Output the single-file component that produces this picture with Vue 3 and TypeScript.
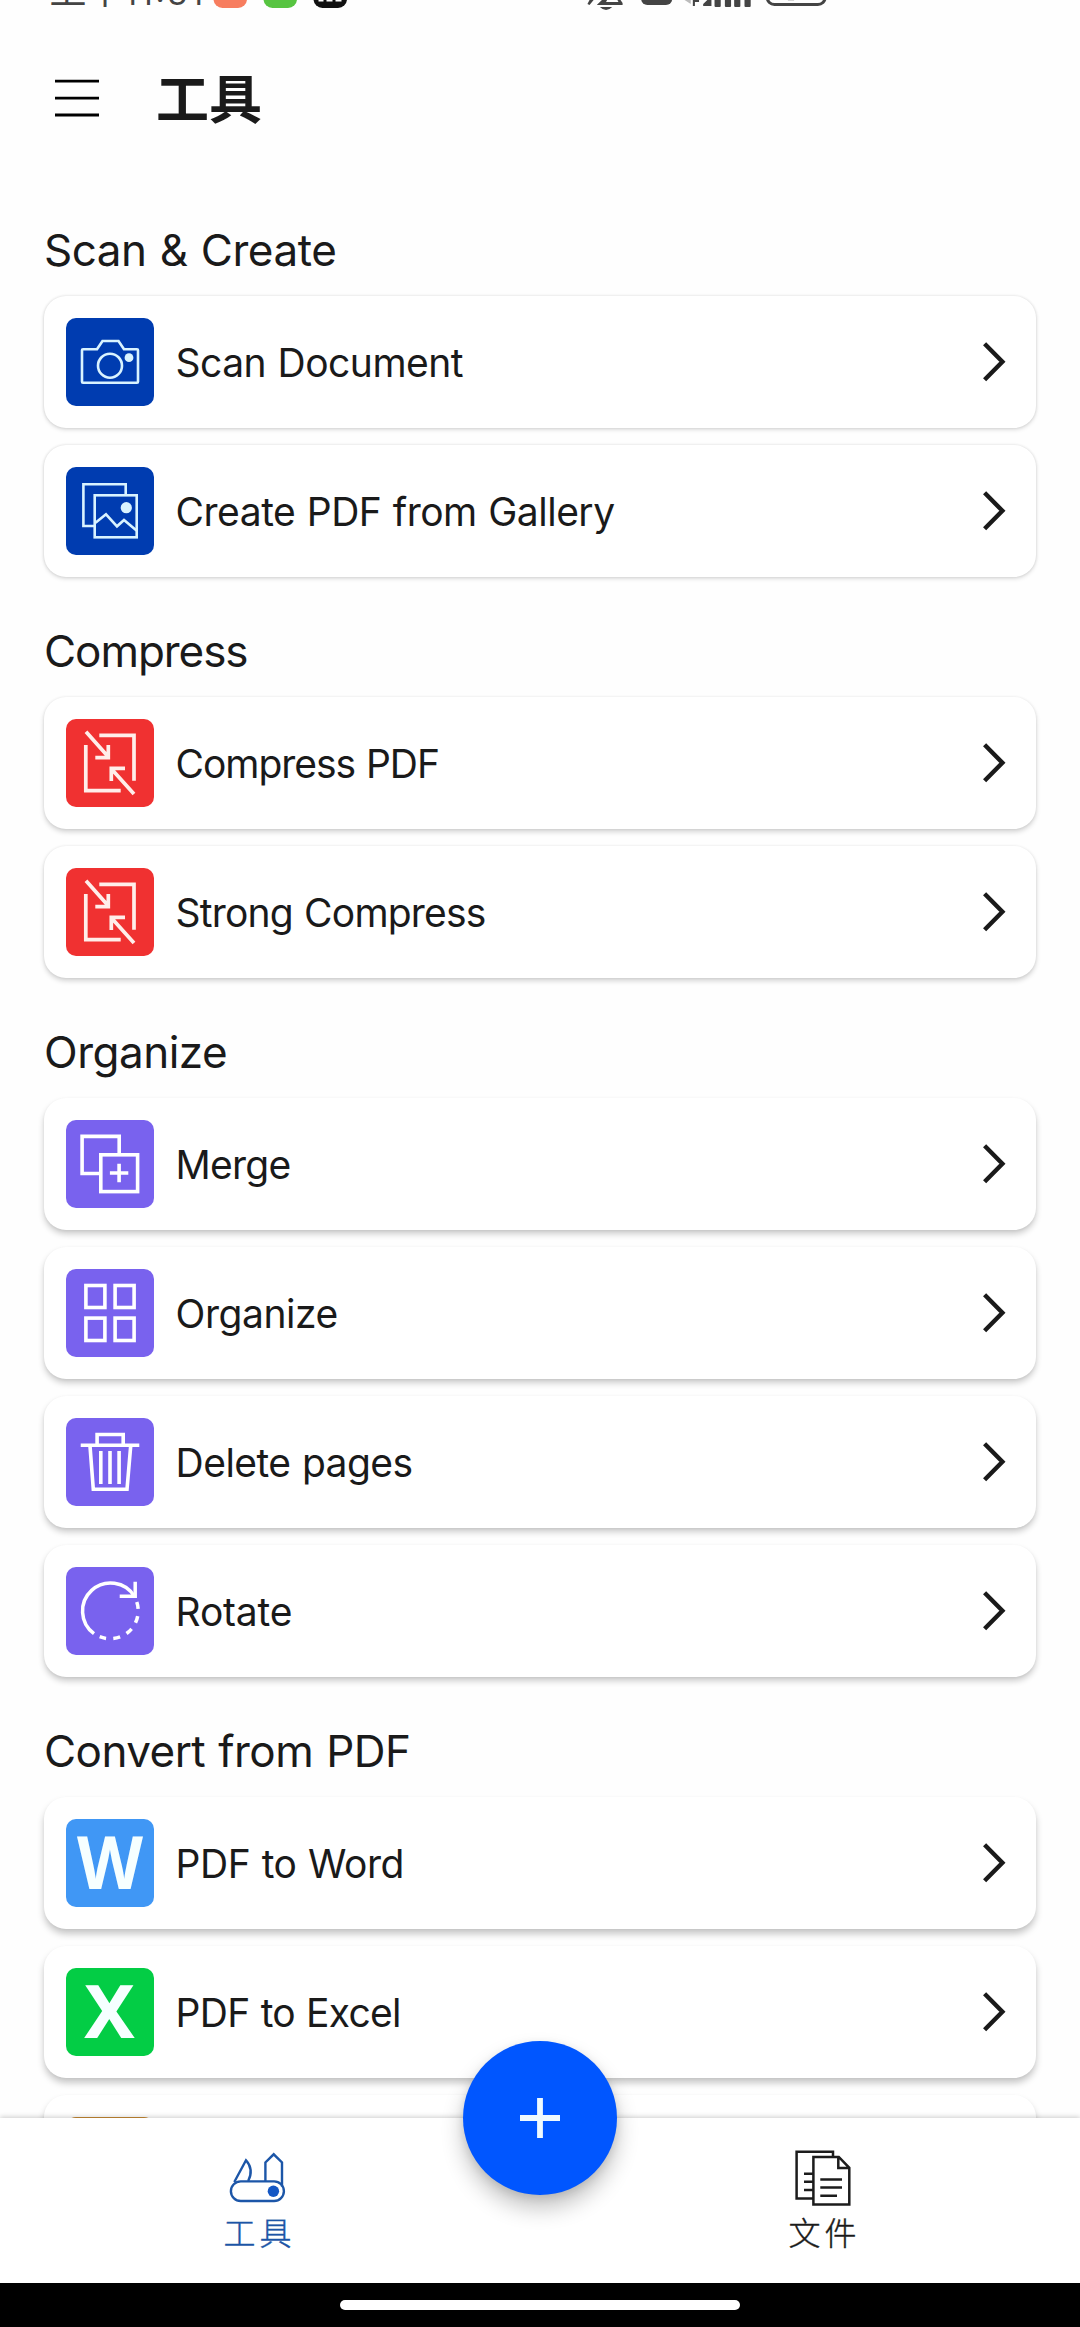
<script setup lang="ts">
interface Tool {
  label: string
  icon: string
  color: string
  tracking: number
}
interface Section {
  title: string
  tracking: number
  tools: Tool[]
}

const BLUE = '#003cb0'
const RED = '#f03131'
const VIOLET = '#7962ee'

const sections: Section[] = [
  {
    title: 'Scan & Create',
    tracking: -0.48,
    tools: [
      { label: 'Scan Document', icon: 'camera', color: BLUE, tracking: -0.52 },
      { label: 'Create PDF from Gallery', icon: 'gallery', color: BLUE, tracking: -0.5 },
    ],
  },
  {
    title: 'Compress',
    tracking: -1.06,
    tools: [
      { label: 'Compress PDF', icon: 'compress', color: RED, tracking: -1.05 },
      { label: 'Strong Compress', icon: 'compress', color: RED, tracking: -0.8 },
    ],
  },
  {
    title: 'Organize',
    tracking: -0.5,
    tools: [
      { label: 'Merge', icon: 'merge', color: VIOLET, tracking: -0.75 },
      { label: 'Organize', icon: 'grid', color: VIOLET, tracking: -0.45 },
      { label: 'Delete pages', icon: 'trash', color: VIOLET, tracking: -0.55 },
      { label: 'Rotate', icon: 'rotate', color: VIOLET, tracking: -0.2 },
    ],
  },
  {
    title: 'Convert from PDF',
    tracking: -0.55,
    tools: [
      { label: 'PDF to Word', icon: 'word', color: '#4097f5', tracking: -0.48 },
      { label: 'PDF to Excel', icon: 'excel', color: '#03cd45', tracking: -0.75 },
      { label: '', icon: '', color: '#c78a35', tracking: 0 },
    ],
  },
]
</script>

<template>
  <div class="screen">
    <svg class="status" viewBox="0 0 1080 24" width="1080" height="24">
      <g class="status-text">
        <text x="49.5" y="4" font-size="37">上午</text>
        <text x="124" y="5" font-size="32" textLength="79" class="clock">11:31</text>
      </g>
      <rect x="213.5" y="-25" width="33.5" height="33" rx="9" fill="#f77d5f" />
      <rect x="263.5" y="-25" width="33.5" height="33" rx="9" fill="#57c441" />
      <rect x="313.5" y="-25" width="33.5" height="33" rx="9" fill="#111" />
      <path d="M318.500 0.500h5M326.500 0.500h6M335.500 0.500h6" stroke="#fff" stroke-width="2" />
      <g transform="translate(-18 0) scale(1.0332 1)">
        <g fill="#444">
          <path d="M588 0l-2 4 2 1 4-5zM600 0l-5 5h25v-2l-2-3h-3l1 2h-12l1-2zM598 7h12q-6 6-12 0z" />
          <rect x="638" y="-20" width="30" height="25" rx="6" />
          <path d="M680 0l6 4v-4z" fill="#bbb" />
          <path d="M688 0h6v2h-4v4h-2zM698 6v-2l4-4h4v6z" />
          <rect x="709" y="-8" width="6" height="15" rx="1" />
          <rect x="719" y="-8" width="6" height="15" rx="1" />
          <rect x="728" y="-8" width="6" height="15" rx="1" />
          <rect x="738" y="-8" width="6" height="15" rx="1" />
        </g>
        <rect x="760" y="-22" width="56" height="26.5" rx="7" fill="none" stroke="#444" stroke-width="3" />
        <path d="M780 0h6" stroke="#aaa" stroke-width="1" />
      </g>
    </svg>

    <header class="header">
      <svg class="menu" width="44" height="38" viewBox="0 0 44 38">
        <path d="M0 2.2h44M0 19.2h44M0 36h44" stroke="#000" stroke-width="2.8" />
      </svg>
      <h1 class="title">工具</h1>
    </header>

    <main class="content">
      <section v-for="section in sections" :key="section.title" class="section">
        <h2 class="heading" :style="{ letterSpacing: section.tracking + 'px' }">{{ section.title }}</h2>
        <div class="cards">
          <div v-for="(tool, i) in section.tools" :key="i" class="card">
            <div class="tile" :style="{ background: tool.color }">
              <svg viewBox="0 0 88 88" width="88" height="88" class="glyph">
                <g v-if="tool.icon === 'camera'" stroke="#d9f3ff" stroke-width="2.6">
                  <path d="M17 31.3H31L36.5 23H52.5L58 31.3H71Q72 31.3 72 32.3V63.7Q72 64.7 71 64.7H17Q16 64.7 16 63.7V32.3Q16 31.3 17 31.3Z" />
                  <circle cx="44" cy="47.7" r="12" />
                  <circle cx="63" cy="39.7" r="4.4" fill="#d9f3ff" stroke="none" />
                </g>
                <g v-else-if="tool.icon === 'gallery'" stroke="#d9f3ff" stroke-width="2.6">
                  <path d="M28 59H17.4V17.3H59.7V28" />
                  <rect x="28.7" y="28.3" width="42" height="42" />
                  <path d="M29.5 55.8L40 47.3L51 59.3L58 53L70.5 63.5" />
                  <circle cx="60.3" cy="40.7" r="5.6" fill="#d9f3ff" stroke="none" />
                </g>
                <g v-else-if="tool.icon === 'compress'" stroke="#ffeeea" stroke-width="3.7">
                  <path d="M33.3 16.3H68V61.7M19.8 26V71.7H54.7" />
                  <path d="M20 12.7L42 37.5M29.3 38.7H42.3V26" />
                  <path d="M68 75L45.5 50M59 49.3H45.3V62" />
                </g>
                <g v-else-if="tool.icon === 'merge'" stroke="#fff" stroke-width="3.6">
                  <path d="M34 53.5H16.1V16.4H53.2V34" />
                  <rect x="34.8" y="34.8" width="36.8" height="36.8" />
                  <path d="M53.1 43.8V62.2M43.9 53H62.3" />
                </g>
                <g v-else-if="tool.icon === 'grid'" stroke="#fff" stroke-width="3.6">
                  <rect x="19.9" y="16.5" width="19" height="22" />
                  <rect x="49.1" y="16.5" width="19" height="22" />
                  <rect x="19.9" y="49.1" width="19" height="22.4" />
                  <rect x="49.1" y="49.1" width="19" height="22.4" />
                </g>
                <g v-else-if="tool.icon === 'trash'" stroke="#fff" stroke-width="3.6">
                  <path d="M14.7 27.2H73.3M31.1 27V16.5H57.2V27" />
                  <path d="M24 28L27.3 71.3H61L64.7 28" />
                  <path d="M34.8 33V66M44 33V66M53.1 33V66" />
                </g>
                <g v-else-if="tool.icon === 'rotate'" stroke="#fff" stroke-width="3.5">
                  <path d="M28 66.6A28 28 0 1 1 68.500 29.500" />
                  <path d="M53.7 29.3H69.2V14.7" />
                  <path d="M70.8 35A28 28 0 0 1 33.7 69.7" stroke-dasharray="7 7.2" />
                </g>
                <text v-else-if="tool.icon === 'word'" x="11" y="70" textLength="66" lengthAdjust="spacingAndGlyphs" class="letter">W</text>
                <text v-else-if="tool.icon === 'excel'" x="18" y="70" textLength="51" lengthAdjust="spacingAndGlyphs" class="letter">X</text>
              </svg>
            </div>
            <span class="label" :style="{ letterSpacing: tool.tracking + 'px' }">{{ tool.label }}</span>
            <svg class="chevron" width="24" height="42" viewBox="0 0 24 42">
              <path d="M2.6 2.8L20.4 20.8L2.6 38.8" fill="none" stroke="#1a1a1a" stroke-width="4.4" />
            </svg>
          </div>
        </div>
      </section>
    </main>

    <nav class="nav">
      <div class="tab active">
        <svg width="60" height="58" viewBox="0 -0.5 60 58" fill="none" stroke="#1c56a8" stroke-width="2.4">
          <path d="M6.3 32.5L18 10.8C24 17.5 24 24 20.2 31.5" />
          <path d="M37.4 31.5V13L45.7 4.8L54 13V37" />
          <rect x="2.9" y="31.9" width="53" height="19.6" rx="9.8" />
          <circle cx="45.4" cy="41.7" r="5.7" fill="#1457c4" stroke="none" />
        </svg>
        <span>工具</span>
      </div>
      <div class="tab">
        <svg width="60" height="58" viewBox="-1 0 60 58" fill="none" stroke="#1c1c1c" stroke-width="2.5">
          <path d="M19 49.6H2.6V2.8H39V8" />
          <path d="M19.4 8H44.8L55.3 18.8V55.6H19.4ZM44.3 8V18.9H55.3" />
          <path d="M26.3 30.4H48M26.3 38.5H48M26.3 46.7H43M10 24.7H19M10 32.8H19M10 41H19" />
        </svg>
        <span>文件</span>
      </div>
      <div class="fab">
        <svg width="40" height="40" viewBox="0 0 40 40">
          <path d="M20 0V40M0 20H40" stroke="#eefaff" stroke-width="5.8" />
        </svg>
      </div>
    </nav>
    <div class="gesture"><div class="pill"></div></div>
  </div>
</template>

<style>
body {
  margin: 0;
  background: #fff;
}
</style>

<style scoped>
.screen {
  width: 1080px;
  height: 2327px;
  display: flex;
  flex-direction: column;
  overflow: hidden;
  background: #fefefe;
  color: #1a1a1a;
  font-family: Inter, "Noto Sans CJK SC", sans-serif;
}
.status {
  flex: none;
  display: block;
}
.status-text {
  fill: #444;
  font-family: "Noto Sans CJK SC", sans-serif;
}
.clock {
  font-family: Inter, sans-serif;
}
.header {
  flex: none;
  height: 152px;
  box-sizing: border-box;
  display: flex;
  align-items: center;
  padding: 0 0 4px 55px;
}
.menu {
  display: block;
}
.title {
  margin: -4px 0 0 57px;
  font: 700 53px/80px "Noto Sans CJK SC", sans-serif;
}
.content {
  flex: 1;
  min-height: 0;
  overflow: hidden;
  padding: 44px 44px 0;
}
.section + .section {
  margin-top: 44px;
}
.heading {
  margin: 0 0 16px;
  font-size: 44px;
  line-height: 60px;
  font-weight: 400;
  word-spacing: 1.3px;
  white-space: nowrap;
}
.cards {
  display: flex;
  flex-direction: column;
  gap: 17px;
}
.card {
  height: 132px;
  box-sizing: border-box;
  display: flex;
  align-items: center;
  padding: 0 30px 0 22px;
  border-radius: 22px;
  background: #fff;
  box-shadow: 0 0 3px rgba(0, 0, 0, 0.13), 0 2px 4px rgba(0, 0, 0, 0.12);
}
.section:nth-child(2) .card {
  box-shadow: 0 0 3px rgba(0, 0, 0, 0.08), 0 3px 5px rgba(0, 0, 0, 0.17);
}
.section:nth-child(3) .card {
  box-shadow: 0 1px 3px rgba(0, 0, 0, 0.05), 0 4px 6px rgba(0, 0, 0, 0.2);
}
.section:nth-child(4) .card {
  box-shadow: 0 1px 3px rgba(0, 0, 0, 0.03), 0 5px 7px rgba(0, 0, 0, 0.22);
}
.tile {
  flex: none;
  width: 88px;
  height: 88px;
  border-radius: 10px;
}
.glyph {
  display: block;
  fill: none;
  overflow: visible;
}
.letter {
  font: 700 73px "Noto Sans", sans-serif;
  fill: #f6ffff;
}
.label {
  flex: 1;
  margin-left: 21.6px;
  padding-top: 2px;
  font-size: 39px;
  line-height: 56px;
  font-weight: 400;
  word-spacing: 1px;
  white-space: nowrap;
}
.chevron {
  flex: none;
  display: block;
}
.nav {
  flex: none;
  position: relative;
  height: 165px;
  display: flex;
  gap: 50px;
  background: #fff;
  box-shadow: 0 -1px 5px rgba(0, 0, 0, 0.2);
}
.tab {
  flex: 1;
  display: flex;
  flex-direction: column;
  align-items: center;
  padding-top: 31px;
}
.tab svg {
  display: block;
}
.tab span {
  padding-left: 4px;
  font: 300 32px/48px "Noto Sans CJK SC", sans-serif;
  letter-spacing: 4px;
  -webkit-text-stroke: 0.4px currentColor;
}
.tab.active {
  color: #1c55a6;
}
.fab {
  position: absolute;
  left: 463px;
  top: -77px;
  width: 154px;
  height: 154px;
  border-radius: 50%;
  display: flex;
  align-items: center;
  justify-content: center;
  background: #0056ff;
  box-shadow: 0 13px 22px rgba(0, 0, 0, 0.24), 0 3px 8px rgba(0, 0, 0, 0.1);
}
.gesture {
  flex: none;
  height: 44px;
  box-sizing: border-box;
  padding-top: 17px;
  background: #000;
}
.pill {
  width: 400px;
  height: 10px;
  margin: 0 auto;
  border-radius: 5px;
  background: #fff;
}
</style>
